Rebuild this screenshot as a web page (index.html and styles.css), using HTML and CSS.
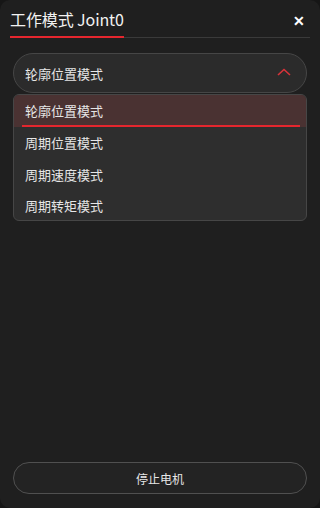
FILE: index.html
```html
<!DOCTYPE html>
<html lang="zh-CN">
<head>
    <meta charset="UTF-8">
    <meta name="viewport" content="width=device-width, initial-scale=1.0">
    <title>工作模式</title>
    <link rel="stylesheet" href="styles.css">
</head>
<body>
    <div class="panel">
        <header class="panel-header">
            <h1 class="panel-title">工作模式 Joint0</h1>
            <span class="close-btn">✕</span>
        </header>

        <div class="select-box">
            <span class="select-value">轮廓位置模式</span>
            <svg class="chevron" width="14" height="8" viewBox="0 0 14 8">
                <path d="M1 7 L7 1.5 L13 7" fill="none" stroke="#d8333a" stroke-width="1.6"/>
            </svg>
        </div>

        <ul class="option-list">
            <li class="option active">轮廓位置模式</li>
            <li class="option">周期位置模式</li>
            <li class="option">周期速度模式</li>
            <li class="option">周期转矩模式</li>
        </ul>

        <div class="spacer"></div>

        <button class="stop-btn">停止电机</button>
    </div>
</body>
</html>
```

FILE: styles.css
```css
:root {
    --bg: #1f1f1f;
    --field-bg: #2b2b2b;
    --list-bg: #2e2e2e;
    --border: #464646;
    --text: #e6e6e6;
    --accent: #e5262e;
    --font: "Noto Sans CJK SC", "Noto Sans", sans-serif;
}

html, body {
    margin: 0;
    padding: 0;
    height: 100%;
    background: #161616;
}

body {
    font-family: var(--font);
    color: var(--text);
}

.panel {
    box-sizing: border-box;
    height: 508px;
    background: var(--bg);
    border-radius: 10px;
    padding: 0 13px 14px 13px;
    display: flex;
    flex-direction: column;
}

.panel-header {
    display: flex;
    align-items: center;
    justify-content: space-between;
    margin: 0 -3px;
    height: 38px;
    border-bottom: 1px solid #3a3a3a;
    box-sizing: border-box;
}

.panel-title {
    margin: 0;
    font-size: 16px;
    font-weight: 400;
    color: #f2f2f2;
    height: 38px;
    line-height: 38px;
    box-sizing: border-box;
    border-bottom: 2px solid var(--accent);
    margin-bottom: -1px;
    letter-spacing: -0.1px;
}

.close-btn {
    font-size: 14px;
    font-weight: 700;
    color: #fff;
    margin-right: 5px;
    margin-top: 2px;
}

.select-box {
    margin-top: 15px;
    height: 40px;
    box-sizing: border-box;
    border: 1px solid var(--border);
    border-radius: 20px;
    background: var(--field-bg);
    display: flex;
    align-items: center;
    justify-content: space-between;
    padding: 0 15px 0 11px;
}

.select-value {
    font-size: 13px;
    color: var(--text);
}

.chevron {
    display: block;
    margin-top: -2px;
}

.option-list {
    list-style: none;
    margin: 1px 0 0 0;
    padding: 0;
    background: var(--list-bg);
    border: 1px solid var(--border);
    border-radius: 6px;
    overflow: hidden;
}

.option {
    height: 32px;
    line-height: 32px;
    font-size: 13px;
    padding-left: 11px;
    color: var(--text);
}

.option:last-child {
    height: 29px;
    line-height: 30px;
}

.option.active {
    background: #4a3232;
    position: relative;
}

.option.active::after {
    content: '';
    position: absolute;
    left: 8px;
    right: 6px;
    bottom: 0;
    height: 2px;
    background: var(--accent);
}

.spacer {
    flex-grow: 1;
}

.stop-btn {
    height: 32px;
    border: 1px solid #505050;
    border-radius: 16px;
    background: #232323;
    color: var(--text);
    font-family: var(--font);
    font-size: 12px;
}
```
